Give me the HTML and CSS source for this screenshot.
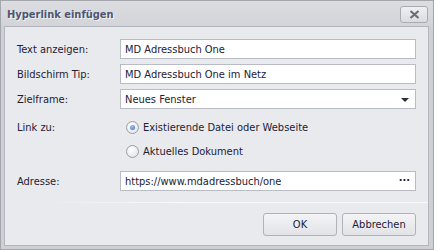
FILE: index.html
```html
<!DOCTYPE html>
<html lang="de">
<head>
    <meta charset="UTF-8">
    <title>Hyperlink einfügen</title>
    <link rel="stylesheet" href="styles.css">
</head>
<body>
    <div class="window">
        <div class="titlebar">
            <span class="title">Hyperlink einfügen</span>
            <button class="close">
                <svg width="11" height="9" viewBox="0 0 11 9"><path d="M1.5 1 L9.5 8 M9.5 1 L1.5 8" stroke="#6a6e7c" stroke-width="2.2"/></svg>
            </button>
        </div>
        <div class="panel">
            <div class="form">
                <label>Text anzeigen:</label>
                <div class="field">MD Adressbuch One</div>
                <label>Bildschirm Tip:</label>
                <div class="field">MD Adressbuch One im Netz</div>
                <label>Zielframe:</label>
                <div class="field select">Neues Fenster<span class="arrow"></span></div>
            </div>
            <div class="links">
                <label>Link zu:</label>
                <div class="radios">
                    <div class="radio checked"><span class="dot"></span>Existierende Datei oder Webseite</div>
                    <div class="radio"><span class="dot"></span>Aktuelles Dokument</div>
                </div>
            </div>
            <div class="form address">
                <label>Adresse:</label>
                <div class="field">https://www.mdadressbuch/one<span class="more">&middot;&middot;&middot;</span></div>
            </div>
            <div class="separator"></div>
            <div class="buttons">
                <button class="btn">OK</button>
                <button class="btn">Abbrechen</button>
            </div>
        </div>
    </div>
</body>
</html>
```
FILE: styles.css
```css
body {
    margin: 0;
    font-family: "DejaVu Sans Condensed", "DejaVu Sans", sans-serif;
    font-stretch: condensed;
    font-size: 11px;
    color: #1c2134;
}
.window {
    width: 434px;
    height: 250px;
    box-sizing: border-box;
    border: 1px solid #a4a6ae;
    background: #cfd0d6;
    display: flex;
    flex-direction: column;
}
.titlebar {
    height: 25px;
    display: flex;
    align-items: center;
    justify-content: space-between;
    padding: 0 5px 0 6px;
    background: linear-gradient(#dcdde1, #d3d4d9);
}
.title {
    font-weight: bold;
    font-size: 11px;
    color: #4e5670;
    text-shadow: 1px 1px 0 #f2f2f4;
    margin-top: 1px;
}
.close {
    width: 28px;
    height: 17px;
    margin-top: 2px;
    border: 1px solid #a9abb3;
    border-radius: 3px;
    background: linear-gradient(#f0f0f2, #dadbe0);
    display: flex;
    align-items: center;
    justify-content: center;
    padding: 0;
}
.panel {
    flex: 1;
    margin: 0 4px 3px 3px;
    border: 1px solid #b4b6be;
    background: #e9eaee;
    padding: 12px 12px 0 12px;
    display: flex;
    flex-direction: column;
}
.form {
    display: grid;
    grid-template-columns: 103px 1fr;
    row-gap: 5px;
    align-items: center;
}
.field {
    height: 18px;
    border: 1px solid #b9bcc4;
    background: #fff;
    display: flex;
    align-items: center;
    padding: 0 4px;
    position: relative;
}
.select .arrow {
    position: absolute;
    right: 6px;
    top: 8px;
    border-left: 4px solid transparent;
    border-right: 4px solid transparent;
    border-top: 4px solid #2a2d3c;
}
.more {
    position: absolute;
    right: 5px;
    top: 2px;
    font-weight: bold;
}
.links {
    display: grid;
    grid-template-columns: 103px 1fr;
    margin-top: 11px;
}
.links label {
    padding-top: 1px;
}
.radios {
    display: flex;
    flex-direction: column;
    gap: 10px;
}
.radio {
    display: flex;
    align-items: center;
    margin-left: 6px;
    height: 14px;
}
.radio .dot {
    width: 11px;
    height: 11px;
    border: 1px solid #9b9ea8;
    border-radius: 50%;
    background: radial-gradient(circle at 40% 35%, #ffffff, #dcdde2);
    margin-right: 4px;
    position: relative;
}
.radio.checked .dot::after {
    content: "";
    position: absolute;
    left: 3px;
    top: 3px;
    width: 5px;
    height: 5px;
    border-radius: 50%;
    background: radial-gradient(circle at 40% 35%, #9fc2ef, #3b6fc4);
}
.address {
    margin-top: 13px;
}
.separator {
    height: 1px;
    margin: 11px -12px 0 20px;
    background: linear-gradient(to right, #e9eaee, #fafafb 40%);
}
.buttons {
    display: flex;
    justify-content: flex-end;
    gap: 5px;
    margin-top: 10px;
}
.btn {
    width: 74px;
    height: 23px;
    font-family: inherit;
    font-size: 11px;
    color: #1c2134;
    border: 1px solid #b0b2ba;
    border-radius: 3px;
    background: linear-gradient(#f4f4f6, #e2e3e7);
    padding: 0;
}
```
